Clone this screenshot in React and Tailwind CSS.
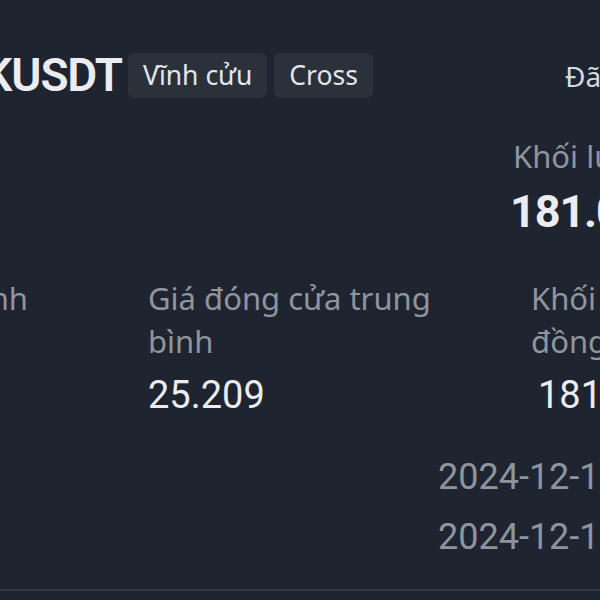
const sans = "font-['Noto_Sans',sans-serif]"
const num = "font-['Roboto',sans-serif]"

function Badge({ children }) {
  return (
    <span className={`h-[45px] px-[15px] flex items-center rounded-md bg-[#2a313b] text-[26.5px] text-[#e3e6ea] whitespace-nowrap ${sans}`}>
      {children}
    </span>
  )
}

export default function App() {
  return (
    <div className="w-[600px] h-[600px] overflow-hidden bg-[#1f2530] flex flex-col">
      <div className="mt-[53px] h-[45px] flex items-center">
        <div className="w-[565px] flex items-center shrink-0">
          <div className="w-[122px] flex justify-end">
            <span className={`shrink-0 whitespace-nowrap text-[46px] font-semibold tracking-tight text-[#eaecef] ${num}`}>
              LINKUSDT
            </span>
          </div>
          <div className="ml-[6px] flex gap-[7px]">
            <Badge>Vĩnh cửu</Badge>
            <Badge>Cross</Badge>
          </div>
        </div>
        <span className={`shrink-0 whitespace-nowrap text-[28px] text-[#d5d9de] ${sans}`}>Đã đóng</span>
      </div>

      <div className="mt-[38px] pl-[513px] flex flex-col">
        <span className={`whitespace-nowrap text-[31px] leading-[40px] text-[#8e959f] ${sans}`}>Khối lượng đóng tối đa</span>
        <span className={`mt-[10px] -ml-[3px] whitespace-nowrap text-[45px] leading-[52px] font-bold tracking-tight text-[#eaecef] ${num}`}>181.0 LINK</span>
      </div>

      <div className="mt-[39px] flex">
        <div className="w-[28px] flex justify-end shrink-0">
          <div className="shrink-0 flex flex-col">
            <span className={`whitespace-nowrap text-[31px] leading-[43px] text-[#8e959f] ${sans}`}>Giá mở cửa trung bình</span>
          </div>
        </div>
        <div className="ml-[120px] w-[340px] shrink-0 flex flex-col">
          <span className={`text-[31px] leading-[43px] text-[#8e959f] ${sans}`}>Giá đóng cửa trung bình</span>
          <span className={`mt-[9px] text-[38px] leading-[46px] text-[#eaecef] ${num}`}>25.209</span>
        </div>
        <div className="ml-[43px] w-[240px] shrink-0 flex flex-col">
          <span className={`text-[31px] leading-[43px] text-[#8e959f] ${sans}`}>Khối lượng hợp đồng đã đóng</span>
          <span className={`mt-[9px] pl-[7px] text-[38px] leading-[46px] text-[#eaecef] ${num}`}>181.0</span>
        </div>
      </div>

      <div className={`mt-[29px] pl-[438px] flex flex-col text-[36px] leading-[60px] text-[#8d949e] whitespace-nowrap ${num}`}>
        <span>2024-12-19 08:15:32</span>
        <span>2024-12-19 21:47:05</span>
      </div>

      <div className="mt-[22px] h-[2px] bg-[#2f3640] shrink-0" />
    </div>
  )
}
